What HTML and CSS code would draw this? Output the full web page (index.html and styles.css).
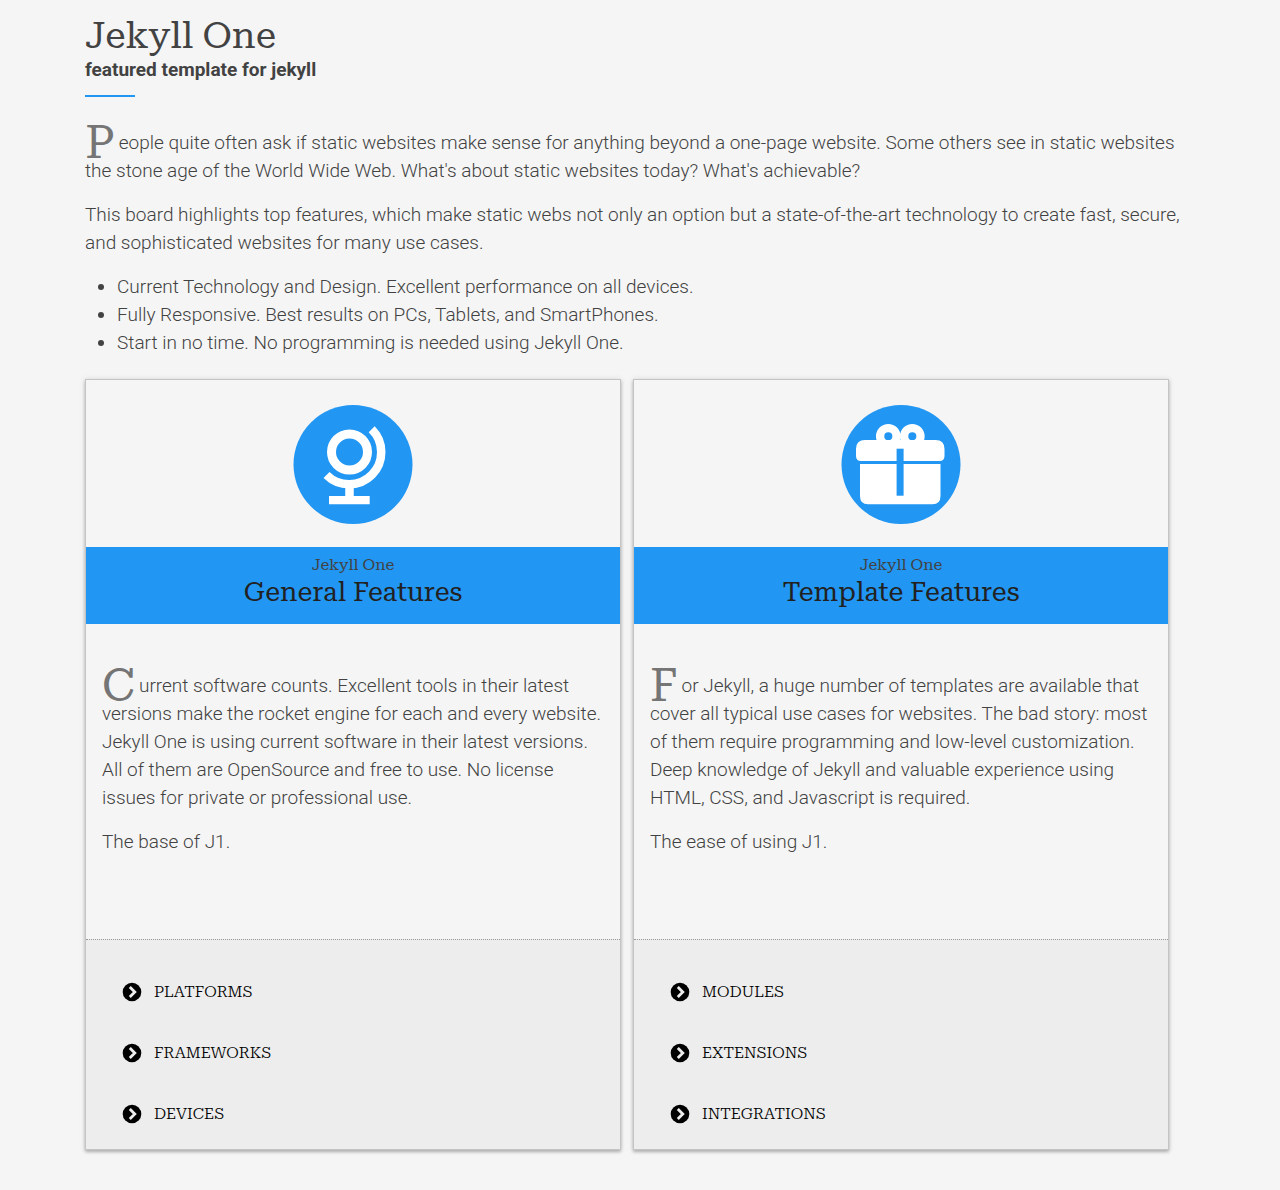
FILE: index.html
```html
<!DOCTYPE html>
<html lang="en">
<head>
<meta charset="utf-8">
<title>Jekyll One</title>
<meta name="viewport" content="width=device-width, initial-scale=1">
<link rel="stylesheet" href="styles.css">
</head>
<body>
<main class="container">
  <header class="intro-head">
    <h1>Jekyll One</h1>
    <p class="tagline">featured template for jekyll</p>
  </header>
  <p><span class="cap">P</span>eople quite often ask if static websites make sense for anything beyond a one-page website. Some others see in static websites the stone age of the World Wide Web. What's about static websites today? What's achievable?</p>
  <p>This board highlights top features, which make static webs not only an option but a state-of-the-art technology to create fast, secure, and sophisticated websites for many use cases.</p>
  <ul class="points">
    <li>Current Technology and Design. Excellent performance on all devices.</li>
    <li>Fully Responsive. Best results on PCs, Tablets, and SmartPhones.</li>
    <li>Start in no time. No programming is needed using Jekyll One.</li>
  </ul>
  <svg class="defs" aria-hidden="true">
    <symbol id="chevron" viewBox="0 0 20 20"><circle cx="10" cy="10" r="9.3"/><path d="M7.800 5 12.800 10 7.800 15" fill="none" stroke="#ededed" stroke-width="2.800"/></symbol>
  </svg>
  <div class="cards">
    <section class="card">
      <div class="card-icon">
        <svg class="badge" viewBox="0 0 120 120" aria-hidden="true">
          <circle cx="60" cy="60.500" r="59.500" fill="#2196f3"/>
          <g fill="none" stroke="#fff">
            <circle cx="56.500" cy="48" r="18" stroke-width="9"/>
            <path d="M78.700 25.300A32 32 0 0 1 33.500 71" stroke-width="8.500"/>
            <path d="M56.500 80V94" stroke-width="8.500"/>
          </g>
          <path d="M36 92H76.700V100.300H36Z" fill="#fff"/>
        </svg>
      </div>
      <header class="card-head">
        <p class="kicker">Jekyll One</p>
        <h2>General Features</h2>
      </header>
      <div class="card-body">
        <p><span class="cap">C</span>urrent software counts. Excellent tools in their latest versions make the rocket engine for each and every website. Jekyll One is using current software in their latest versions. All of them are OpenSource and free to use. No license issues for private or professional use.</p>
        <p>The base of J1.</p>
      </div>
      <nav class="card-links" aria-label="General Features">
        <a href="#"><svg aria-hidden="true"><use href="#chevron"/></svg>PLATFORMS</a>
        <a href="#"><svg aria-hidden="true"><use href="#chevron"/></svg>FRAMEWORKS</a>
        <a href="#"><svg aria-hidden="true"><use href="#chevron"/></svg>DEVICES</a>
      </nav>
    </section>
    <section class="card">
      <div class="card-icon">
        <svg class="badge" viewBox="0 0 120 120" aria-hidden="true">
          <circle cx="60" cy="60.500" r="59.500" fill="#2196f3"/>
          <g fill="none" stroke="#fff" stroke-width="8.300"><circle cx="47.300" cy="32.300" r="8.200"/><circle cx="71.300" cy="32.300" r="8.200"/></g>
          <path d="M24 36H94.500Q103.500 36 103.500 45V52Q103.500 57 98.500 57H20Q15 57 15 52V45Q15 36 24 36ZM19 60H99.500V92Q99.500 100.300 91.500 100.300H27Q19 100.300 19 92Z" fill="#fff"/>
          <path d="M55.600 44.700H62.600V91.700H55.600Z" fill="#2196f3"/>
        </svg>
      </div>
      <header class="card-head">
        <p class="kicker">Jekyll One</p>
        <h2>Template Features</h2>
      </header>
      <div class="card-body">
        <p><span class="cap">F</span>or Jekyll, a huge number of templates are available that cover all typical use cases for websites. The bad story: most of them require programming and low-level customization. Deep knowledge of Jekyll and valuable experience using HTML, CSS, and Javascript is required.</p>
        <p>The ease of using J1.</p>
      </div>
      <nav class="card-links" aria-label="Template Features">
        <a href="#"><svg aria-hidden="true"><use href="#chevron"/></svg>MODULES</a>
        <a href="#"><svg aria-hidden="true"><use href="#chevron"/></svg>EXTENSIONS</a>
        <a href="#"><svg aria-hidden="true"><use href="#chevron"/></svg>INTEGRATIONS</a>
      </nav>
    </section>
  </div>
</main>
</body>
</html>
```
FILE: styles.css
```css
* { box-sizing: border-box; }
body { margin: 0; background: #f5f5f5; color: #424242; font: 300 19px/28px Roboto, sans-serif; }
h1, h2, .cap, .kicker, .card-links { font-family: "Roboto Slab", "Roboto Serif", "DejaVu Serif", serif; font-weight: 400; }
p { margin: 0 0 16px; }
.container { max-width: 1110px; margin: 0 auto; padding: 16px 0 40px; }
h1 { margin: 0; font-size: 37px; line-height: 40px; }
.tagline { margin: 0; font-weight: 700; }
.intro-head::after { content: ""; display: block; width: 50px; height: 2px; margin: 11px 0 32px; background: #2196f3; }
.cap { float: left; margin: 0 4px 0 0; font-size: 46px; line-height: 26px; color: #757575; }
.points { margin: 0 0 22px; padding-left: 32px; }
.defs { display: none; }
.cards { display: grid; grid-template-columns: 1fr 1fr; gap: 12px; margin-right: 26px; }
.card { display: flex; flex-direction: column; border: 1px solid #c4c4c4; box-shadow: 0 2px 3px rgba(0,0,0,.25), 0 0 6px rgba(0,0,0,.1); }
.card-icon { display: flex; justify-content: center; padding: 24px 0 23px; }
.badge { width: 120px; height: 120px; }
.card-head { padding: 8px 16px 15px; background: #2196f3; text-align: center; }
.kicker { margin: 0; font-size: 16px; line-height: 20px; }
h2 { margin: 0; font-size: 27px; line-height: 34px; color: #212121; }
.card-body { flex: 1; min-height: 315px; padding: 48px 16px 16px; }
.card-links { display: flex; flex-direction: column; align-items: flex-start; gap: 33px; padding: 38px 36px 21px; border-top: 1px dotted #999; background: #ededed; font-size: 16px; font-weight: 300; }
.card-links a { display: flex; align-items: center; gap: 12px; color: #000; text-decoration: none; }
.card-links svg { width: 20px; height: 20px; }
@media (max-width: 800px) {
  .container { padding: 16px; }
  .cards { grid-template-columns: 1fr; margin-right: 0; }
}
```
